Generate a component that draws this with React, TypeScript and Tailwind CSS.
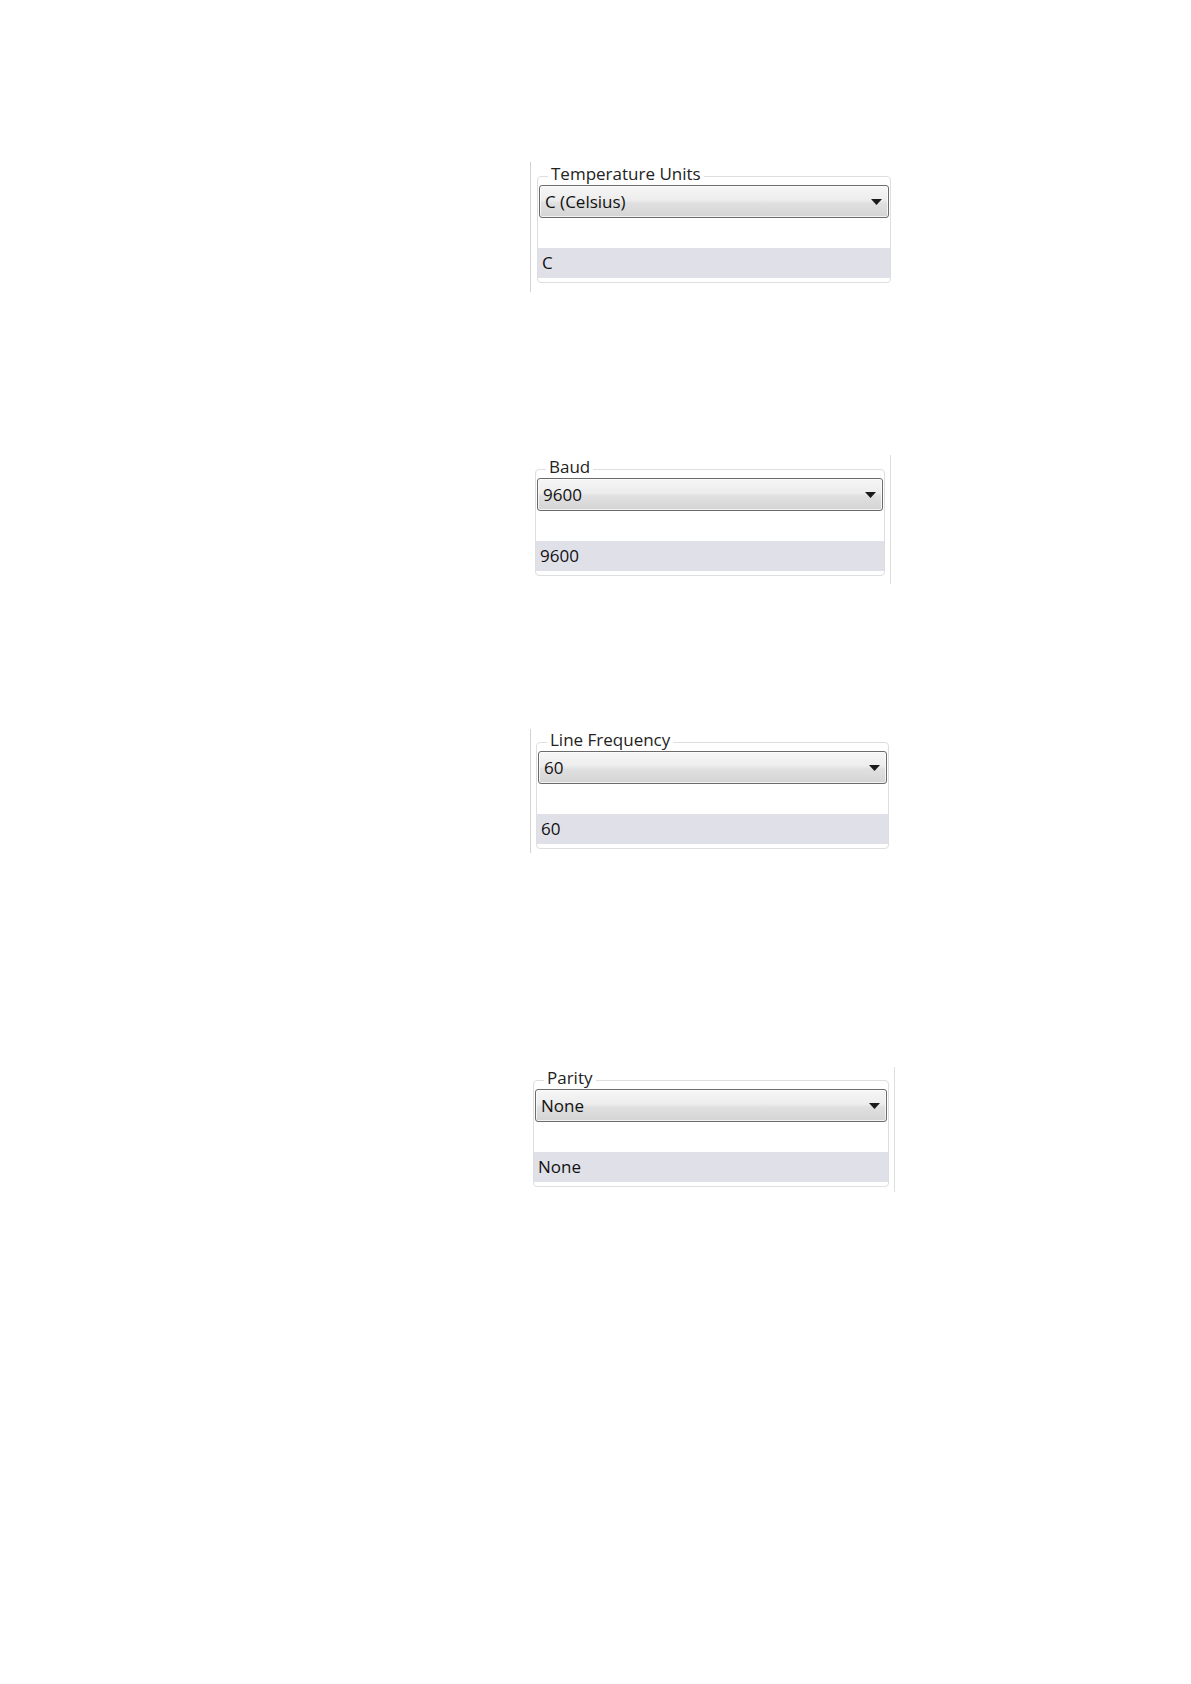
import React from 'react';

type PanelProps = {
  label: string;
  value: string;
  shown: string;
};

function ComboBox({ value }: { value: string }) {
  return (
    <div className="mx-[1px] h-[33px] flex items-center justify-between rounded-[3px] border border-[#6b6b6b] bg-[linear-gradient(to_bottom,#f6f6f6_0%,#ededed_45%,#e0e0e0_55%,#d4d4d4_100%)] shadow-[inset_0_0_0_1px_rgba(255,255,255,0.7)] pl-[5px] pr-[5px]">
      <span className="text-[17px] leading-[20px] text-[#111]">{value}</span>
      <svg width="11" height="6" viewBox="0 0 11 6" className="mr-[1px]">
        <path d="M0 0 L11 0 L5.5 6 Z" fill="#1a1a1a" />
      </svg>
    </div>
  );
}

function GroupBox({ label, value, shown }: PanelProps) {
  return (
    <div className="relative h-[107px] rounded-[4px] border border-[#dedede] pt-[8px] pb-[4px]">
      <span className="absolute left-[10px] -top-[13px] bg-white px-[3px] text-[17px] leading-[20px] text-[#222]">
        {label}
      </span>
      <ComboBox value={value} />
      <div className="mt-[30px] h-[30px] flex items-center bg-[#e0e0e9] pl-[4px]">
        <span className="text-[17px] leading-[20px] text-[#111]">{shown}</span>
      </div>
    </div>
  );
}

export default function App() {
  return (
    <div className="w-[1191px] min-h-[1684px] bg-white flex flex-col font-['Open_Sans','Noto_Sans',sans-serif]">
      {/* Temperature Units */}
      <div className="mt-[162px] ml-[530px] flex items-start">
        <div className="w-px h-[130px] bg-[#d2d2d2]" />
        <div className="ml-[6px] mt-[14px] w-[354px]">
          <GroupBox label="Temperature Units" value="C (Celsius)" shown="C" />
        </div>
      </div>

      {/* Baud */}
      <div className="mt-[163px] ml-[535px] flex items-start">
        <div className="mt-[14px] w-[350px]">
          <GroupBox label="Baud" value="9600" shown="9600" />
        </div>
        <div className="ml-[5px] w-px h-[129px] bg-[#dedede]" />
      </div>

      {/* Line Frequency */}
      <div className="mt-[145px] ml-[530px] flex items-start">
        <div className="w-px h-[124px] bg-[#d2d2d2]" />
        <div className="ml-[5px] mt-[13px] w-[353px]">
          <GroupBox label="Line Frequency" value="60" shown="60" />
        </div>
      </div>

      {/* Parity */}
      <div className="mt-[214px] ml-[533px] flex items-start">
        <div className="mt-[13px] w-[356px]">
          <GroupBox label="Parity" value="None" shown="None" />
        </div>
        <div className="ml-[5px] w-px h-[125px] bg-[#dedede]" />
      </div>
    </div>
  );
}
